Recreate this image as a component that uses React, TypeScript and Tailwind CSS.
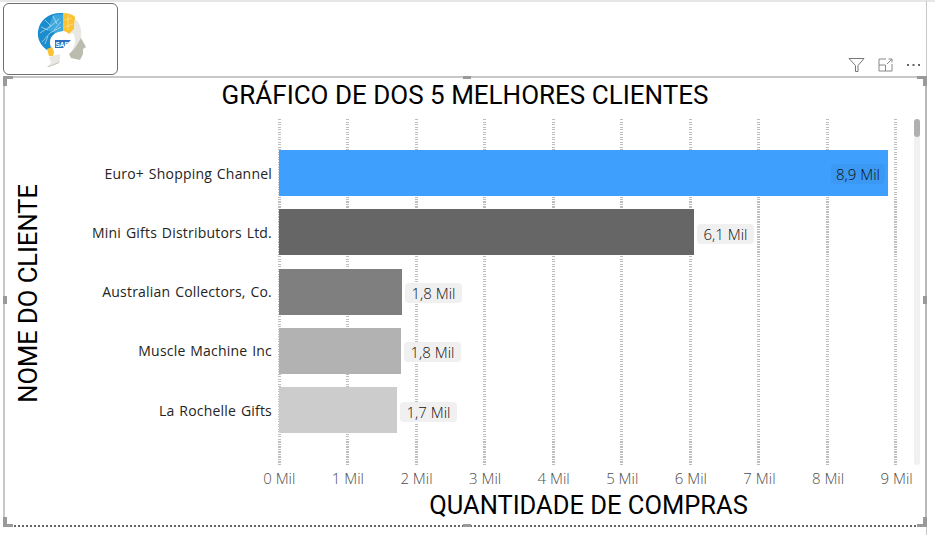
const bars = [
  { label: "Euro+ Shopping Channel", value: "8,9 Mil", width: 609, color: "#3f9ffc", tag: "#3b99f3" },
  { label: "Mini Gifts Distributors Ltd.", value: "6,1 Mil", width: 415, color: "#666666", tag: "#f0f0f0" },
  { label: "Australian Collectors, Co.", value: "1,8 Mil", width: 123, color: "#7f7f7f", tag: "#f0f0f0" },
  { label: "Muscle Machine Inc", value: "1,8 Mil", width: 122, color: "#b2b2b2", tag: "#f0f0f0" },
  { label: "La Rochelle Gifts", value: "1,7 Mil", width: 118, color: "#cccccc", tag: "#f0f0f0" },
];
const ticks = [0, 1, 2, 3, 4, 5, 6, 7, 8, 9];

function Logo() {
  return (
    <svg width="60" height="65" viewBox="30 10 60 65">
      <path d="M46 50 C38 44 35 36 38 27 C41 18 50 12 62 13 L62 31 C54 31 48 37 49 44 L50 48 Z" fill="#1b8ccd" />
      <path d="M62 13 C67 13 71 14 74 17 L73 29 L68 34 C66 32 64 31 62 31 Z" fill="#fbc233" />
      <path d="M74 19 C79 23 81 29 80 38 L75 48 L71 50 C75 44 75 38 72 33 L68 34 L73 29 Z" fill="#e8e7e1" />
      <path d="M80 38 L85 47 L82 49 L82 54 L79 60 L70 58 L68 54 L74 48 Z" fill="#bcbcae" />
      <path d="M46 49 L51 47 L53 52 L52 56 L48 56 Z" fill="#fbc233" />
      <path d="M48 57 L59 54 L59 62 L46 67 L50 63 Z" fill="#e8e7e1" />
      <path d="M46 67 L58 62 L58 63 L48 67 Z" fill="#bcbcae" />
      <path d="M52 15 L62 14 L62 31 L54 33 L46 30 Z" fill="#4fb3e3" opacity="0.7" />
      <g stroke="#ffffff" strokeWidth="0.6" fill="none" opacity="0.85">
        <path d="M39 33 L50 26 L58 19 M41 42 L49 33 L60 27 M44 20 L50 26 M52 16 L56 24 M40 27 L47 30 M44 44 L47 36 M53 30 L60 22" />
        <path d="M64 20 L71 18 M64 27 L72 24 M67 15 L67 30" stroke="#fff3c4" />
      </g>
      <path d="M54 40 L70 40 L62 48 L54 48 Z" fill="#2d6fc0" />
      <text x="54.5" y="46.5" fontSize="6.5" fontWeight="700" fill="#ffffff" fontFamily="Liberation Sans, sans-serif">SAP</text>
    </svg>
  );
}

function Handle({ className }: { className: string }) {
  return <div className={`absolute bg-[#9a9a9a] ${className}`} />;
}

export default function App() {
  return (
    <div className="flex h-[535px] w-[935px] flex-col overflow-hidden bg-white pl-[3px] pr-[8px] pt-[3px] font-['Open_Sans',sans-serif]">
      <div className="-ml-[3px] -mr-[8px] -mt-[3px] h-[2px] shrink-0 bg-[#e6e6e6]" />
      <div className="-mt-[1px] flex h-[75px] shrink-0 items-end justify-between border-r border-[#c8c8c8]">
        <div className="mt-[2px] flex h-[72px] w-[115px] items-start justify-center self-start rounded-md border border-[#6f6f6f] pt-[6px]">
          <Logo />
        </div>
        <div className="mb-[3px] mr-[5px] flex items-center gap-[13px] text-[#8a8886]">
          <svg width="17" height="16" viewBox="0 0 17 16" fill="none" stroke="#777" strokeWidth="1">
            <path d="M1 1.5 H16 L10 8.5 V14.5 H7.5 V8.5 Z" />
          </svg>
          <svg width="15" height="14" viewBox="0 0 15 14" fill="none" stroke="#888" strokeWidth="1">
            <path d="M8 1 H1 V13 H14 V6 M1 7 H7.5 V13 M9 6 L14 1 M10.5 1 H14 V4.5" />
          </svg>
          <svg width="15" height="4" viewBox="0 0 15 4" fill="#666">
            <rect x="1" y="1" width="2" height="2" />
            <rect x="6.5" y="1" width="2" height="2" />
            <rect x="12" y="1" width="2" height="2" />
          </svg>
        </div>
      </div>

      <div className="relative flex h-[451px] w-[924px] shrink-0 border-l-2 border-r-2 border-t-2 border-l-[#c8c8c8] border-r-[#b8b8b8] border-t-[#c8c8c8] border-b-2 border-b-[#666] [border-bottom-style:dotted]">
        <Handle className="-left-[2px] -top-[2px] h-[10px] w-[4px]" />
        <Handle className="-left-[2px] -top-[2px] h-[3px] w-[10px]" />
        <Handle className="-bottom-[2px] -left-[2px] h-[10px] w-[4px]" />
        <Handle className="-bottom-[2px] -left-[2px] h-[3px] w-[10px]" />
        <Handle className="-right-[2px] -top-[2px] h-[10px] w-[4px]" />
        <Handle className="-right-[2px] -top-[2px] h-[3px] w-[10px]" />
        <Handle className="-bottom-[2px] -right-[2px] h-[10px] w-[4px]" />
        <Handle className="-bottom-[2px] -right-[2px] h-[3px] w-[10px]" />
        <Handle className="-top-[2px] left-[458px] h-[3px] w-[8px]" />
        <Handle className="-bottom-[2px] left-[458px] h-[3px] w-[8px]" />
        <Handle className="-left-[2px] top-[218px] h-[8px] w-[4px]" />
        <Handle className="-right-[2px] top-[218px] h-[8px] w-[4px]" />

        <div className="flex w-[45px] shrink-0 items-center justify-center pb-[17px] pl-[2px]">
          <div className="rotate-180 whitespace-nowrap text-[25.5px] leading-none text-black [font-family:'Roboto',sans-serif] [writing-mode:vertical-rl]">
            NOME DO CLIENTE
          </div>
        </div>

        <div className="flex min-w-0 flex-1 flex-col">
          <div className="flex h-[34px] shrink-0 items-center justify-center pr-[45px] text-[26px] leading-none text-black [font-family:'Roboto',sans-serif]">
            GRÁFICO DE DOS 5 MELHORES CLIENTES
          </div>

          <div className="flex h-[353px] shrink-0 pt-[7px]">
            <div className="relative w-[862px] shrink-0">
              <div className="absolute left-[227.5px] top-0 flex h-[346px] w-[620px] justify-between">
                {ticks.map((t) => (
                  <div
                    key={t}
                    className="w-[3px] bg-[repeating-linear-gradient(to_bottom,#bdbdbd_0,#bdbdbd_1px,transparent_1px,transparent_2.5px)]"
                  />
                ))}
              </div>
              <div className="relative flex flex-col gap-[13.3px] pt-[31px]">
                {bars.map((b) => (
                  <div key={b.label} className="flex h-[46px] items-center">
                    <div className="w-[222px] shrink-0 whitespace-nowrap text-right text-[14px] tracking-[0.2px] text-[#252423] [word-spacing:1px]">
                      {b.label}
                    </div>
                    <div className="relative ml-[7px] flex h-[46px] items-center">
                      <div className="h-[46px]" style={{ width: b.width, backgroundColor: b.color }} />
                      {b.width > 500 ? (
                        <div
                          className="absolute right-[3px] mt-[2px] rounded-sm px-[5px] text-[15px] font-light leading-[20px] text-[#111111]"
                          style={{ backgroundColor: b.tag }}
                        >
                          {b.value}
                        </div>
                      ) : (
                        <div
                          className="ml-[3px] mt-[3px] whitespace-nowrap rounded-sm px-[6.5px] text-[15px] font-light leading-[20px] text-[#111111]"
                          style={{ backgroundColor: b.tag }}
                        >
                          {b.value}
                        </div>
                      )}
                    </div>
                  </div>
                ))}
              </div>
            </div>
            <div className="ml-[2px] h-[346px] w-[6px] rounded-sm bg-[#f1f1f1]">
              <div className="h-[18px] w-[6px] rounded bg-[#b0b0b0]" />
            </div>
          </div>

          <div className="ml-[195px] flex w-[686px] shrink-0 pt-[3px] text-[15px] font-light leading-[20px] text-[#4f4d4b]">
            {ticks.map((t) => (
              <div key={t} className="w-[68.6px] whitespace-nowrap text-center">
                {t} Mil
              </div>
            ))}
          </div>
          <div className="flex flex-1 items-start justify-center pl-[202px] pt-[5px] text-[25.5px] leading-none text-black [font-family:'Roboto',sans-serif]">
            QUANTIDADE DE COMPRAS
          </div>
        </div>
      </div>
      <div className="flex-1 border-r border-[#c8c8c8]" />
    </div>
  );
}
